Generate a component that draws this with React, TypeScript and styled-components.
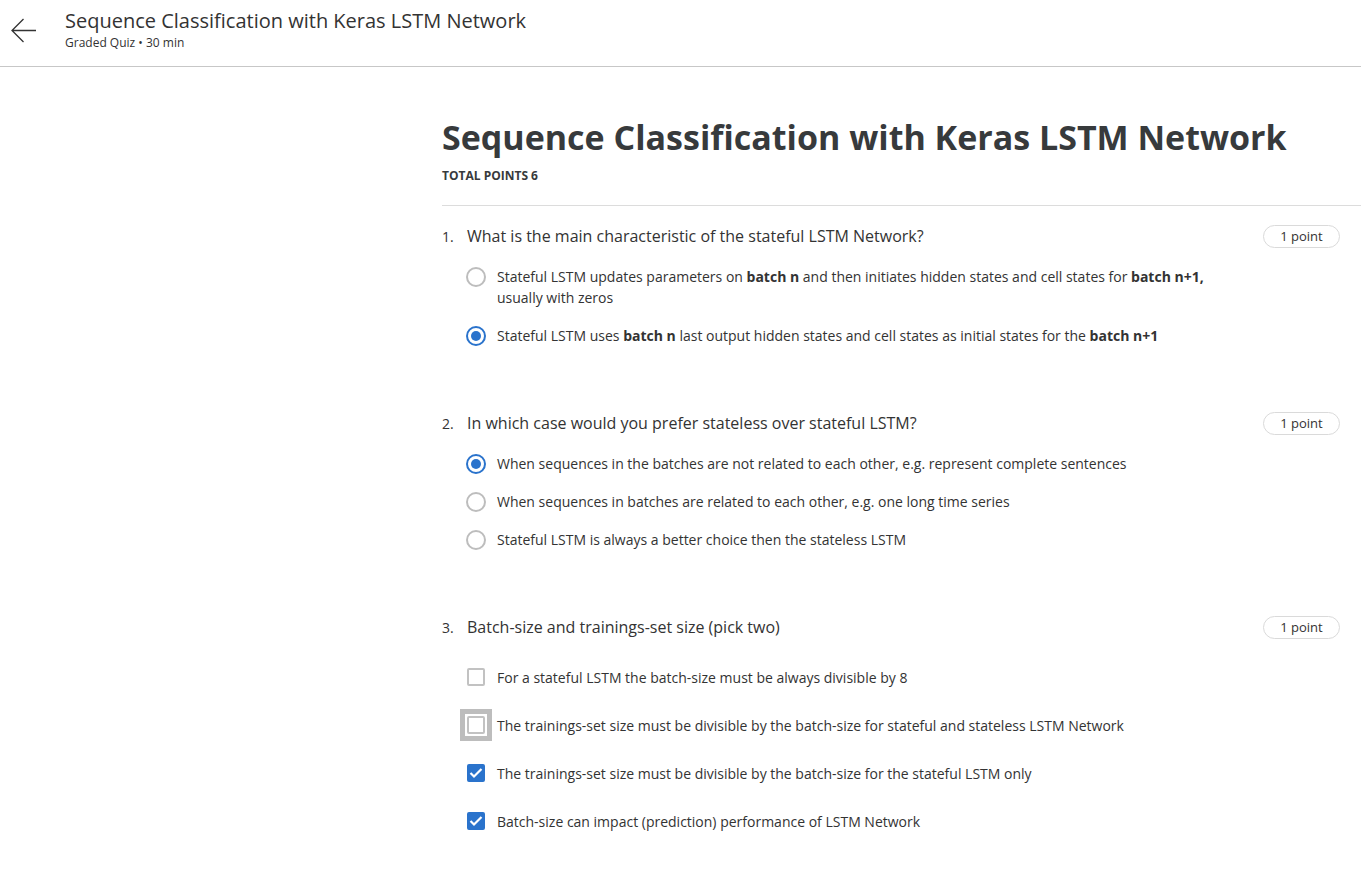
import styled, { createGlobalStyle } from 'styled-components'

const GlobalStyle = createGlobalStyle`
body{
    margin: 0;
    background: #fff;
    font-family: "Open Sans", "Noto Sans", sans-serif;
    color: #373a3c;
}
*{
    box-sizing: border-box;
}
`

const HeaderStyles = styled.header`
height: 67px;
border-bottom: 1px solid #c7c7c7;
display: flex;
align-items: flex-start;
>.back{
    width: 65px;
    padding: 18px 0 0 11px;
    color: #333;
}
>.titles{
    padding-top: 8px;
    >h2{
        margin: 0;
        font-size: 20px;
        font-weight: 400;
        line-height: 26px;
        color: #333;
    }
    >p{
        margin: 1px 0 0;
        font-size: 12px;
        line-height: 16px;
        color: #333;
    }
}
`

const MainStyles = styled.main`
padding: 47px 0 40px 442px;
>h1{
    margin: 0;
    font-size: 34px;
    font-weight: 700;
    line-height: 46px;
    color: #373a3c;
}
>.total{
    margin: 8px 0 0;
    font-size: 12px;
    font-weight: 700;
    line-height: 16px;
    text-transform: uppercase;
    color: #373a3c;
}
>hr{
    margin: 21px 0 18px;
    border: none;
    border-top: 1px solid #dcdcdc;
}
`

const QuestionStyles = styled.section<{ $last?: boolean }>`
padding-right: 21px;
margin-bottom: ${({ $last }) => ($last ? '0' : '65px')};
>.head{
    display: flex;
    align-items: center;
    height: 24px;
    >.num{
        width: 25px;
        font-size: 14px;
        color: #333;
    }
    >.text{
        flex: 1;
        font-size: 16px;
        color: #333;
    }
}
`

const PointBadge = styled.span`
height: 23px;
width: 77px;
border: 1px solid #dadada;
border-radius: 12px;
display: flex;
align-items: center;
justify-content: center;
font-size: 13px;
color: #333;
`

const OptionList = styled.ul<{ $check?: boolean }>`
list-style: none;
margin: ${({ $check }) => ($check ? '22px' : '18px')} 0 0 24px;
padding: 0;
display: flex;
flex-direction: column;
gap: ${({ $check }) => ($check ? '16px' : '17px')};
`

const OptionRow = styled.li<{ $check?: boolean }>`
display: flex;
align-items: ${({ $check }) => ($check ? 'center' : 'flex-start')};
min-height: ${({ $check }) => ($check ? '32px' : '21px')};
gap: 11px;
>.label{
    max-width: 730px;
    font-size: 14px;
    line-height: 21px;
    color: #333;
    b{
        font-weight: 700;
    }
}
`

const RadioStyles = styled.span<{ $on?: boolean }>`
flex: none;
width: 20px;
height: 20px;
margin-top: 0.5px;
border-radius: 50%;
border: 2px solid ${({ $on }) => ($on ? '#2a73cc' : '#bdbdbd')};
position: relative;
&::after{
    content: '';
    display: ${({ $on }) => ($on ? 'block' : 'none')};
    position: absolute;
    width: 10px;
    height: 10px;
    border-radius: 50%;
    background: #2a73cc;
    top: 50%;
    left: 50%;
    transform: translate(-50%, -50%);
}
`

const CheckStyles = styled.span<{ $on?: boolean; $focus?: boolean }>`
flex: none;
width: 18px;
height: 18px;
margin: 0 1px;
border-radius: 2px;
border: 2px solid ${({ $on }) => ($on ? '#2a73cc' : '#c2c2c2')};
background: ${({ $on }) => ($on ? '#2a73cc' : '#fff')};
display: flex;
align-items: center;
justify-content: center;
position: relative;
&::before{
    content: '';
    display: ${({ $focus }) => ($focus ? 'block' : 'none')};
    position: absolute;
    inset: -9px;
    border: 5px solid #bdbdbd;
}
`

type Opt = { text: React.ReactNode; on?: boolean; focus?: boolean }

interface QuestionProps {
    num: number,
    title: string,
    options: Opt[],
    check?: boolean,
    last?: boolean,
}

const Question = ({ num, title, options, check, last }: QuestionProps) => {
    return (
        <QuestionStyles $last={last}>
            <div className='head'>
                <span className='num'>{num}.</span>
                <span className='text'>{title}</span>
                <PointBadge>1 point</PointBadge>
            </div>
            <OptionList $check={check}>
                {options.map((o, i) => (
                    <OptionRow key={i} $check={check}>
                        {check ? (
                            <CheckStyles $on={o.on} $focus={o.focus}>
                                {o.on && (
                                    <svg width="14" height="12" viewBox="0 0 14 12">
                                        <path d="M1.5 6 L5 9.5 L12.5 2" fill="none" stroke="#fff" strokeWidth="2.2" />
                                    </svg>
                                )}
                            </CheckStyles>
                        ) : (
                            <RadioStyles $on={o.on} />
                        )}
                        <span className='label'>{o.text}</span>
                    </OptionRow>
                ))}
            </OptionList>
        </QuestionStyles>
    )
}

const App = () => {
    return (
        <>
            <GlobalStyle />
            <HeaderStyles>
                <div className='back'>
                    <svg width="26" height="26" viewBox="0 0 26 26">
                        <path d="M1 12.5 H25 M12.5 1 L1 12.5 L12.5 24" fill="none" stroke="#333" strokeWidth="1.3" />
                    </svg>
                </div>
                <div className='titles'>
                    <h2>Sequence Classification with Keras LSTM Network</h2>
                    <p>Graded Quiz • 30 min</p>
                </div>
            </HeaderStyles>
            <MainStyles>
                <h1>Sequence Classification with Keras LSTM Network</h1>
                <p className='total'>Total points 6</p>
                <hr />
                <Question
                    num={1}
                    title="What is the main characteristic of the stateful LSTM Network?"
                    options={[
                        { text: <>Stateful LSTM updates parameters on <b>batch n</b> and then initiates hidden states and cell states for <b>batch n+1,</b> usually with zeros</> },
                        { text: <>Stateful LSTM uses <b>batch n</b> last output hidden states and cell states as initial states for the <b>batch n+1</b></>, on: true },
                    ]}
                />
                <Question
                    num={2}
                    title="In which case would you prefer stateless over stateful LSTM?"
                    options={[
                        { text: 'When sequences in the batches are not related to each other, e.g. represent complete sentences', on: true },
                        { text: 'When sequences in batches are related to each other, e.g. one long time series' },
                        { text: 'Stateful LSTM is always a better choice then the stateless LSTM' },
                    ]}
                />
                <Question
                    num={3}
                    check
                    last
                    title="Batch-size and trainings-set size (pick two)"
                    options={[
                        { text: 'For a stateful LSTM the batch-size must be always divisible by 8' },
                        { text: 'The trainings-set size must be divisible by the batch-size for stateful and stateless LSTM Network', focus: true },
                        { text: 'The trainings-set size must be divisible by the batch-size for the stateful LSTM only', on: true },
                        { text: 'Batch-size can impact (prediction) performance of LSTM Network', on: true },
                    ]}
                />
            </MainStyles>
        </>
    )
}

export default App
